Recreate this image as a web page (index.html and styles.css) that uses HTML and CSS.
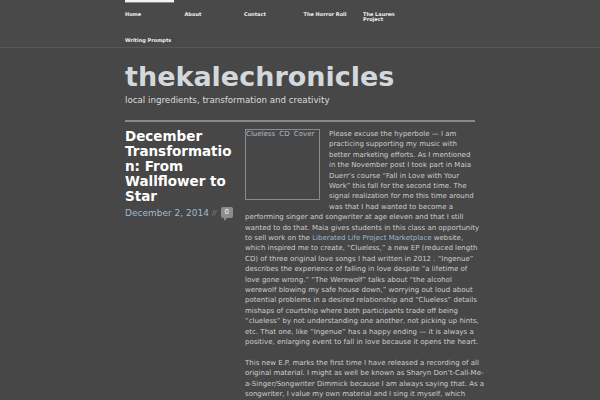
FILE: index.html
```html
<!DOCTYPE html>
<html>
<head>
<meta charset="utf-8">
<link rel="stylesheet" href="styles.css">
</head>
<body>
<div class="page">
  <nav class="nav">
    <ul class="menu">
      <li class="item active"><a href="#">Home</a></li>
      <li class="item"><a href="#">About</a></li>
      <li class="item"><a href="#">Contact</a></li>
      <li class="item"><a href="#">The Horror Roll</a></li>
      <li class="item"><a href="#">The Lauren Project</a></li>
      <li class="item"><a href="#">Writing Prompts</a></li>
    </ul>
  </nav>
  <header class="header">
    <h1 class="site-title">thekalechronicles</h1>
    <p class="tagline">local ingredients, transformation and creativity</p>
    <hr class="rule">
  </header>
  <main class="post">
    <div class="post-head">
      <h2 class="post-title">December Transformation: From Wallflower to Star</h2>
      <div class="meta">
        <span class="date">December 2, 2014</span>
        <span class="sep">//</span>
        <span class="bubble">0</span>
      </div>
    </div>
    <div class="entry">
      <div class="cover">Clueless CD Cover</div>
      <p>Please excuse the hyperbole — I am<br>
      practicing supporting my music with<br>
      better marketing efforts. As I mentioned<br>
      in the November post I took part in Maia<br>
      Duerr’s course “Fall in Love with Your<br>
      Work” this fall for the second time. The<br>
      signal realization for me this time around<br>
      was that I had wanted to become a<br>
      performing singer and songwriter at age eleven and that I still<br>
      wanted to do that. Maia gives students in this class an opportunity<br>
      to sell work on the <a class="link" href="#">Liberated Life Project Marketplace</a> website,<br>
      which inspired me to create, “Clueless,” a new EP (reduced length<br>
      CD) of three original love songs I had written in 2012 . “Ingenue”<br>
      describes the experience of falling in love despite “a lifetime of<br>
      love gone wrong.” “The Werewolf” talks about “the alcohol<br>
      werewolf blowing my safe house down,” worrying out loud about<br>
      potential problems in a desired relationship and “Clueless” details<br>
      mishaps of courtship where both participants trade off being<br>
      “clueless” by not understanding one another, not picking up hints,<br>
      etc. That one, like “Ingenue” has a happy ending — it is always a<br>
      positive, enlarging event to fall in love because it opens the heart.</p>
      <p>This new E.P. marks the first time I have released a recording of all<br>
      original material. I might as well be known as Sharyn Don’t-Call-Me-<br>a-Singer/Songwriter Dimmick because I am always saying that. As a<br>
      songwriter, I value my own material and I sing it myself, which<br>
      makes me a singer as well, whether or not I like to admit it.</p>
    </div>
  </main>
</div>
</body>
</html>
```
FILE: styles.css
```css
html, body {
  margin: 0;
  padding: 0;
  background: #474747;
}
body {
  font-family: "DejaVu Sans", Verdana, sans-serif;
  color: #cfcfcf;
}
.page {
  width: 350px;
  margin: 0 auto;
}
.nav {
  border-bottom: 1px solid #575757;
  margin: 0 -125px;
  padding: 0 125px;
  background: #494949;
}
.menu {
  list-style: none;
  margin: 0;
  padding: 0;
  display: flex;
  flex-wrap: wrap;
  align-items: flex-start;
}
.item {
  width: 59.5px;
  box-sizing: border-box;
  padding: 11.5px 9.5px 4.5px 0;
  font-size: 5px;
  line-height: 5px;
  font-weight: bold;
  position: relative;
}
.item a {
  color: #f0f0f0;
  text-decoration: none;
  display: block;
}
.item.active::before {
  content: "";
  position: absolute;
  left: 0;
  top: 0;
  width: 49px;
  height: 2px;
  background: #f4f4f4;
  border-bottom: 1px solid #8a8a8a;
}
.header {
  padding-top: 14px;
}
.site-title {
  margin: 0;
  font-size: 27px;
  line-height: 30px;
  font-weight: bold;
  color: #d3d8db;
}
.tagline {
  margin: 3.4px 0 0;
  font-size: 8.7px;
  line-height: 10px;
  color: #dcdcdc;
}
.rule {
  margin: 14.6px 0 7px;
  border: 0;
  height: 2px;
  background: #8a8a8a;
}
.post {
  display: grid;
  grid-template-columns: 112px 255px;
  column-gap: 8px;
  align-items: start;
}
.post-title {
  margin: 0;
  font-size: 13.5px;
  line-height: 15px;
  font-weight: bold;
  color: #ffffff;
  overflow-wrap: anywhere;
}
.meta {
  margin-top: 2.5px;
  height: 14px;
  display: flex;
  align-items: center;
}
.date {
  font-size: 9px;
  color: #9fbad1;
}
.sep {
  font-size: 7px;
  color: #8c8c8c;
  margin: 0 4px 0 3px;
}
.bubble {
  position: relative;
  display: inline-block;
  background: #8c8c8c;
  color: #fff;
  font-size: 7px;
  line-height: 11px;
  height: 11px;
  width: 12px;
  text-align: center;
  border-radius: 2px;
  margin-top: -2px;
}
.bubble::after {
  content: "";
  position: absolute;
  left: 3px;
  bottom: -3px;
  border-left: 3px solid #8c8c8c;
  border-bottom: 3px solid transparent;
}
.entry {
  font-size: 7px;
  line-height: 10.4px;
  color: #cdcdcd;
}
.entry p {
  margin: 0 0 10.4px;
}
.cover {
  float: left;
  width: 75px;
  height: 71px;
  border: 1px solid #8a8a8a;
  margin: 0 9px 5px 0;
  box-sizing: border-box;
  color: #a9bccc;
  font-size: 7px;
  line-height: 9px;
  word-spacing: 2px;
}
.link {
  color: #9db7cf;
  text-decoration: none;
}
```
